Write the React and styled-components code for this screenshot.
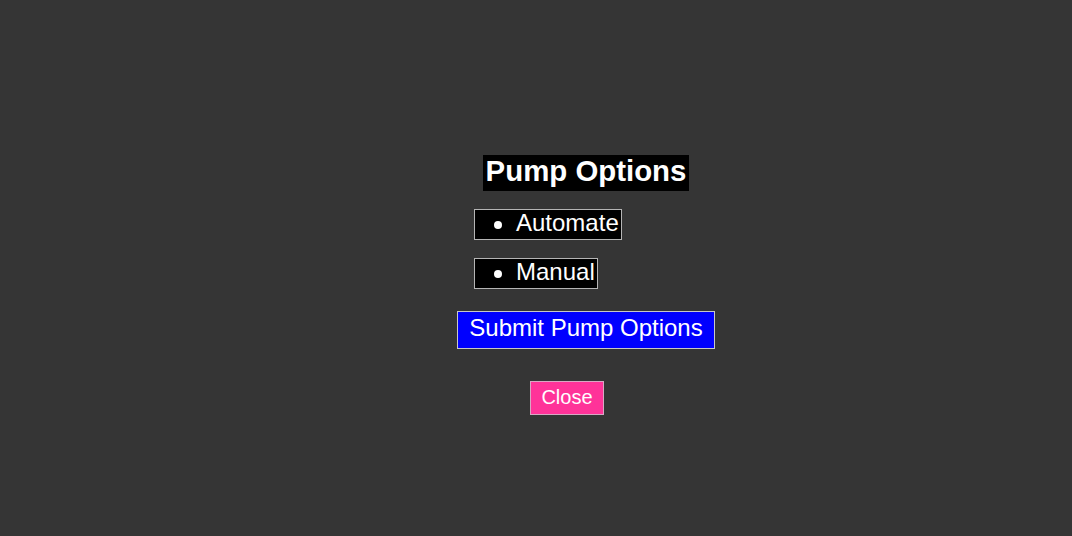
import React from "react";
import styled, { createGlobalStyle } from "styled-components";

const GlobalStyle = createGlobalStyle`
  html, body {
    margin: 0;
    padding: 0;
    background: #353535;
    font-family: "Liberation Sans", Arial, sans-serif;
  }
`;

const Page = styled.div`
  width: 1072px;
  height: 536px;
  display: flex;
  justify-content: flex-start;
  box-sizing: border-box;
  padding: 155px 0 0 400px;
`;

const Panel = styled.form`
  width: 372px;
  display: flex;
  flex-direction: column;
  align-items: center;
`;

const Title = styled.h2`
  margin: 0;
  background: #000;
  color: #fff;
  font-size: 29.4px;
  font-weight: bold;
  line-height: 32px;
  height: 36px;
  box-sizing: border-box;
  padding: 0 3px 4px;
`;

const OptionList = styled.ul`
  list-style: none;
  margin: 18px 0 0 74px;
  padding: 0;
  align-self: flex-start;
  display: flex;
  flex-direction: column;
  align-items: flex-start;
  gap: 18px;
`;

const Option = styled.li`
  display: flex;
  align-items: center;
  height: 29px;
  box-sizing: content-box;
  background: #000;
  color: #fff;
  border: 1px solid #b5b5b5;
  font-size: 24px;
  line-height: 25px;
  padding: 0 2px 0 19px;
  cursor: pointer;

  & span {
    padding-bottom: 4px;
  }

  &::before {
    content: "";
    width: 8px;
    height: 8px;
    border-radius: 50%;
    background: #fff;
    margin-right: 14px;
    margin-top: 1px;
  }
`;

const SubmitButton = styled.button`
  margin-top: 22px;
  height: 38px;
  box-sizing: border-box;
  background: #0000ff;
  color: #fff;
  border: 1px solid #c8c8c8;
  font-family: inherit;
  font-size: 24px;
  line-height: 27px;
  white-space: nowrap;
  padding: 0 11px 5px;
  cursor: pointer;
`;

const CloseButton = styled.button`
  margin: 32px 38px 0 0;
  height: 34px;
  box-sizing: border-box;
  background: #ff3399;
  color: #fff;
  border: 1px solid #d7a8c4;
  font-family: inherit;
  font-size: 20px;
  line-height: 23px;
  white-space: nowrap;
  padding: 0 10px 1px;
  cursor: pointer;
`;

export default function App() {
  return (
    <>
      <GlobalStyle />
      <Page>
        <Panel onSubmit={(e) => e.preventDefault()}>
          <Title>Pump Options</Title>
          <OptionList>
            <Option>
              <span>Automate</span>
            </Option>
            <Option>
              <span>Manual</span>
            </Option>
          </OptionList>
          <SubmitButton type="submit">Submit Pump Options</SubmitButton>
          <CloseButton type="button">Close</CloseButton>
        </Panel>
      </Page>
    </>
  );
}
